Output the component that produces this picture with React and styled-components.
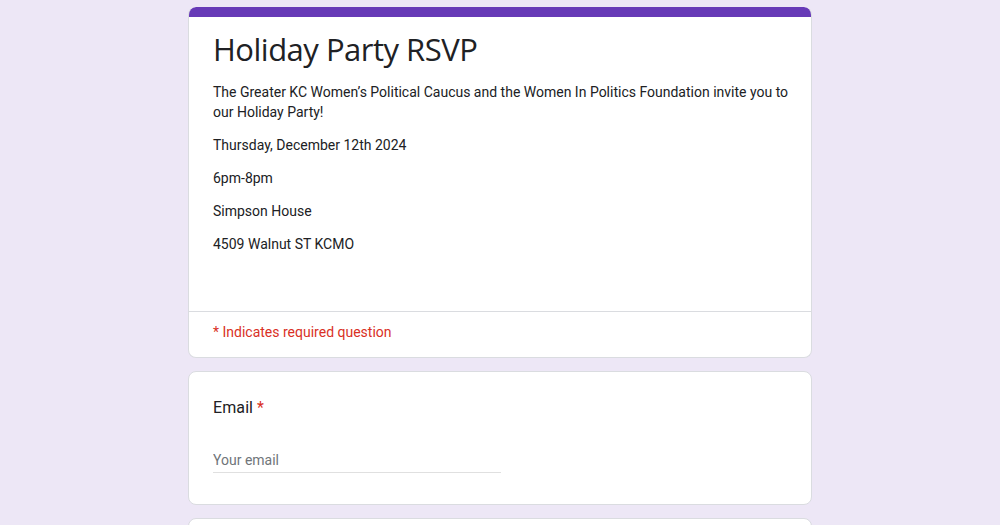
import React from 'react';
import styled, { createGlobalStyle } from 'styled-components';

const GlobalStyle = createGlobalStyle`
	html, body {
		margin: 0;
		padding: 0;
		background: #ede7f6;
	}
	body {
		font-family: Roboto, 'Liberation Sans', Arial, sans-serif;
		color: #202124;
	}
`;

const Page = styled.div`
	min-height: 525px;
	padding-top: 7px;
	display: flex;
	flex-direction: column;
	align-items: center;
	gap: 13px;
`;

const Card = styled.div`
	width: 624px;
	box-sizing: border-box;
	background: #fff;
	border: 1px solid #dadce0;
	border-radius: 8px;
	overflow: hidden;
`;

const HeaderCard = styled(Card)`
	border-top: none;
`;

const Accent = styled.div`
	height: 10px;
	background: #673ab7;
	border-radius: 8px 8px 0 0;
	margin: 0 -1px;
`;

const HeaderBody = styled.div`
	padding: 12px 18px 57px 24px;
`;

const Title = styled.h1`
	margin: 0 0 13px;
	font-family: 'Open Sans', Roboto, sans-serif;
	font-weight: 400;
	font-size: 31px;
	line-height: 40px;
	letter-spacing: -0.5px;
	color: #202124;
`;

const Para = styled.p`
	margin: 0 0 13px;
	font-size: 14px;
	line-height: 20px;
	&:last-child {
		margin-bottom: 0;
	}
`;

const Required = styled.div`
	border-top: 1px solid #dadce0;
	padding: 10px 24px 15px;
	font-size: 14px;
	line-height: 20px;
	color: #d93025;
`;

const Question = styled(Card)`
	padding: 24px 24px 31px;
	min-height: ${(p) => p.$minHeight || 0}px;
`;

const Label = styled.div`
	font-size: 16px;
	line-height: 24px;
	letter-spacing: 0.1px;
	color: #202124;
`;

const Star = styled.span`
	color: #d93025;
	margin-left: 4px;
`;

const Input = styled.input`
	display: block;
	width: 288px;
	box-sizing: border-box;
	margin-top: 30px;
	height: 23px;
	padding: 0 0 2px;
	border: none;
	border-bottom: 1px solid #e0e0e0;
	outline: none;
	font-family: Roboto, 'Liberation Sans', Arial, sans-serif;
	font-size: 14px;
	color: #202124;
	background: transparent;
	&::placeholder {
		color: #70757a;
	}
`;

export default function App() {
	return (
		<>
			<GlobalStyle />
			<Page>
				<HeaderCard>
					<Accent />
					<HeaderBody>
						<Title>Holiday Party RSVP</Title>
						<Para>
							The Greater KC Women’s Political Caucus and the Women In Politics Foundation invite
							you to our Holiday Party!
						</Para>
						<Para>Thursday, December 12th 2024</Para>
						<Para>6pm-8pm</Para>
						<Para>Simpson House</Para>
						<Para>4509 Walnut ST KCMO</Para>
					</HeaderBody>
					<Required>* Indicates required question</Required>
				</HeaderCard>
				<Question>
					<Label>
						Email<Star>*</Star>
					</Label>
					<Input type='email' placeholder='Your email' />
				</Question>
				<Question $minHeight={120} />
			</Page>
		</>
	);
}
